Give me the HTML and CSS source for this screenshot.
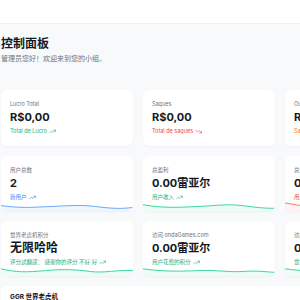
FILE: index.html
```html
<!DOCTYPE html>
<html>
<head>
    <title>控制面板</title>
    <link rel="stylesheet" href="styles.css">
</head>
<body>
<div class="topbar"></div>
<div class="main">
    <h1>控制面板</h1>
    <p class="subtitle">管理员您好！欢迎来到您的小组。</p>

    <div class="stats-grid">
        <!-- row 1 -->
        <div class="card">
            <div class="card-label">Lucro Total</div>
            <div class="card-value">R$0,00</div>
            <div class="card-sub green">Total de Lucro
                <svg class="trend" viewBox="0 0 24 24"><polyline points="22 7 13.5 15.5 8.5 10.5 2 17"/><polyline points="16 7 22 7 22 13"/></svg>
            </div>
        </div>
        <div class="card">
            <div class="card-label">Saques</div>
            <div class="card-value">R$0,00</div>
            <div class="card-sub red">Total de saques
                <svg class="trend" viewBox="0 0 24 24"><polyline points="22 17 13.5 8.5 8.5 13.5 2 7"/><polyline points="16 17 22 17 22 11"/></svg>
            </div>
        </div>
        <div class="card">
            <div class="card-label">Outros</div>
            <div class="card-value">R$0,00</div>
            <div class="card-sub orange">Saldo total</div>
        </div>

        <!-- row 2 -->
        <div class="card">
            <div class="card-label">用户总数</div>
            <div class="card-value">2</div>
            <div class="card-sub blue">新用户
                <svg class="trend" viewBox="0 0 24 24"><polyline points="22 7 13.5 15.5 8.5 10.5 2 17"/><polyline points="16 7 22 7 22 13"/></svg>
            </div>
            <svg class="wave blue-wave" viewBox="0 0 133 10" preserveAspectRatio="none">
                <path class="fill" d="M0 4 C20 7 30 6 50 5 S80 3 95 5 S120 8 133 6 L133 10 L0 10 Z"/>
                <path class="line" d="M0 4 C20 7 30 6 50 5 S80 3 95 5 S120 8 133 6"/>
            </svg>
        </div>
        <div class="card">
            <div class="card-label">总盈利</div>
            <div class="card-value">0.00雷亚尔</div>
            <div class="card-sub green">用户收入
                <svg class="trend" viewBox="0 0 24 24"><polyline points="22 7 13.5 15.5 8.5 10.5 2 17"/><polyline points="16 7 22 7 22 13"/></svg>
            </div>
            <svg class="wave green-wave" viewBox="0 0 133 10" preserveAspectRatio="none">
                <path class="fill" d="M0 3 C20 7 35 6 55 5 S85 2 100 4 S120 7 133 7 L133 10 L0 10 Z"/>
                <path class="line" d="M0 3 C20 7 35 6 55 5 S85 2 100 4 S120 7 133 7"/>
            </svg>
        </div>
        <div class="card">
            <div class="card-label">总亏损</div>
            <div class="card-value">0.00雷亚尔</div>
            <div class="card-sub red">用户支出</div>
            <svg class="wave red-wave" viewBox="0 0 133 10" preserveAspectRatio="none">
                <path class="fill" d="M0 1 C15 4 30 7 55 6 S85 5 133 6 L133 10 L0 10 Z"/>
                <path class="line" d="M0 1 C15 4 30 7 55 6 S85 5 133 6"/>
            </svg>
        </div>

        <!-- row 3 -->
        <div class="card">
            <div class="card-label">世界老虎机积分</div>
            <div class="card-value cjk">无限哈哈</div>
            <div class="card-sub green">评分試翻譯：&nbsp;感谢你的评分 不好 好
                <svg class="trend" viewBox="0 0 24 24"><polyline points="22 7 13.5 15.5 8.5 10.5 2 17"/><polyline points="16 7 22 7 22 13"/></svg>
            </div>
            <svg class="wave green-wave" viewBox="0 0 133 10" preserveAspectRatio="none">
                <path class="fill" d="M0 2 C15 6 25 6 45 4 S75 3 90 5 S115 3 133 4 L133 10 L0 10 Z"/>
                <path class="line" d="M0 2 C15 6 25 6 45 4 S75 3 90 5 S115 3 133 4"/>
            </svg>
        </div>
        <div class="card">
            <div class="card-label">访问 ondaGames.com</div>
            <div class="card-value">0.00雷亚尔</div>
            <div class="card-sub green">用户花费的积分
                <svg class="trend" viewBox="0 0 24 24"><polyline points="22 7 13.5 15.5 8.5 10.5 2 17"/><polyline points="16 7 22 7 22 13"/></svg>
            </div>
            <svg class="wave green-wave" viewBox="0 0 133 10" preserveAspectRatio="none">
                <path class="fill" d="M0 2 C20 5 35 5 55 4 S85 6 100 5 S120 5 133 6 L133 10 L0 10 Z"/>
                <path class="line" d="M0 2 C20 5 35 5 55 4 S85 6 100 5 S120 5 133 6"/>
            </svg>
        </div>
        <div class="card">
            <div class="card-label">访问 ondaGames</div>
            <div class="card-value">0.00雷亚尔</div>
            <div class="card-sub green">世界老虎机</div>
            <svg class="wave green-wave" viewBox="0 0 133 10" preserveAspectRatio="none">
                <path class="fill" d="M0 2 C15 4 30 6 55 5 S85 4 133 5 L133 10 L0 10 Z"/>
                <path class="line" d="M0 2 C15 4 30 6 55 5 S85 4 133 5"/>
            </svg>
        </div>
    </div>

    <div class="panel">
        <h3>GGR 世界老虎机</h3>
    </div>
</div>
</body>
</html>
```

FILE: styles.css
```css
html, body {
    margin: 0;
    padding: 0;
    overflow: hidden;
}

body {
    font-family: Inter, "Noto Sans CJK SC", sans-serif;
    background-color: #f8f9fb;
    color: #111827;
    width: 300px;
    height: 300px;
}

.topbar {
    height: 24px;
    background-color: #fff;
    border-bottom: 1px solid #f0f1f4;
    box-sizing: border-box;
}

.main {
    padding: 11px 0 0 1px;
}

h1 {
    margin: 0;
    font-size: 12px;
    line-height: 18px;
    font-weight: 700;
    color: #111827;
}

.subtitle {
    margin: 1px 0 0;
    font-size: 7px;
    line-height: 10px;
    color: #6b7280;
}

.stats-grid {
    display: grid;
    grid-template-columns: repeat(3, 132px);
    gap: 10px;
    margin-top: 26px;
}

.card {
    background-color: #fff;
    border-radius: 6px;
    padding: 9px 9px 9px;
    box-shadow: 0 1px 2px rgba(15, 23, 42, 0.04);
    overflow: hidden;
    display: flex;
    flex-direction: column;
}

.card-label {
    font-size: 5.5px;
    line-height: 10px;
    color: #6b7280;
}

.card-value {
    font-size: 11px;
    line-height: 16px;
    font-weight: 700;
    color: #111827;
}

.card-value.cjk {
    font-size: 12px;
}

.card-sub {
    font-size: 5.5px;
    line-height: 12px;
    display: flex;
    align-items: center;
    gap: 2px;
    white-space: nowrap;
}

.green { color: #22b07d; }
.red { color: #ef4444; }
.blue { color: #3b82f6; }
.orange { color: #f97316; }

.trend {
    width: 7px;
    height: 7px;
    fill: none;
    stroke: currentColor;
    stroke-width: 2;
    stroke-linecap: round;
    stroke-linejoin: round;
}

.wave {
    display: block;
    height: 9px;
    margin: -1px -9px -9px;
    width: calc(100% + 18px);
}

.wave .line {
    fill: none;
    stroke-width: 1;
}

.blue-wave .line { stroke: #60a5fa; }
.blue-wave .fill { fill: #eff6ff; }
.green-wave .line { stroke: #34d399; }
.green-wave .fill { fill: #ecfdf5; }
.red-wave .line { stroke: #f87171; }
.red-wave .fill { fill: #fef2f2; }

.panel {
    margin-top: 10px;
    width: 420px;
    background-color: #fff;
    border-radius: 6px;
    padding: 6px 9px;
    min-height: 40px;
}

.panel h3 {
    margin: 0;
    font-size: 6.5px;
    line-height: 10px;
    font-weight: 700;
}
```
